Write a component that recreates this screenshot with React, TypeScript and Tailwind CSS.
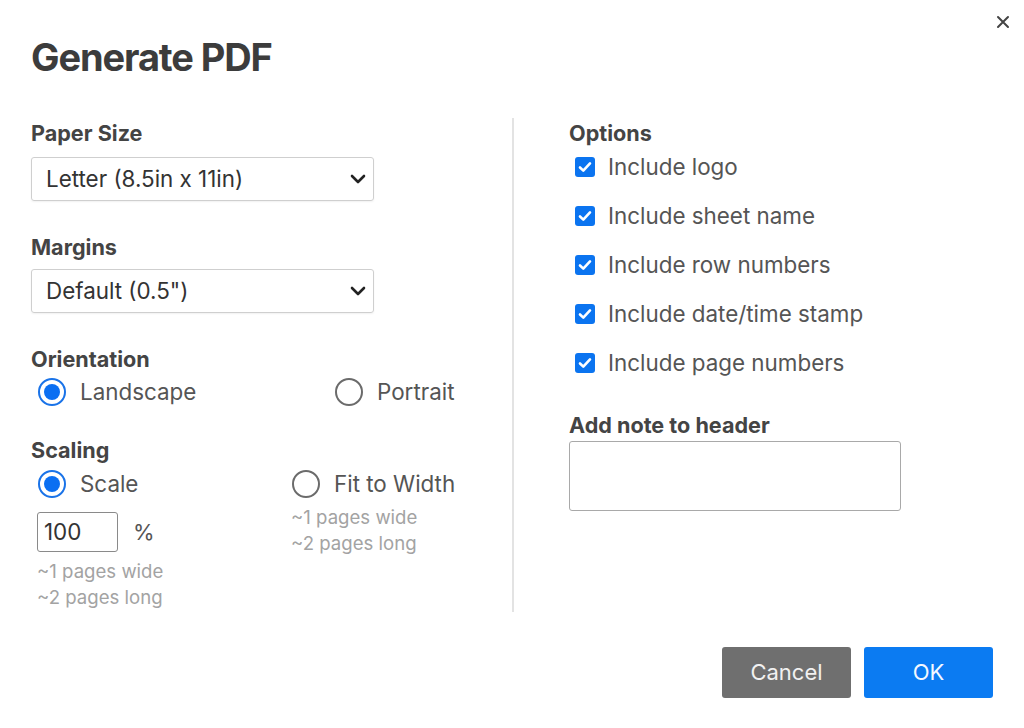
import React from "react";

function Chevron() {
  return (
    <svg width="16" height="10" viewBox="0 0 16 10" className="shrink-0">
      <path d="M2 2 L8 8 L14 2" fill="none" stroke="#222" strokeWidth="2.6" strokeLinecap="round" strokeLinejoin="round" />
    </svg>
  );
}

function Select({ value }: { value: string }) {
  return (
    <div className="flex h-[44px] w-[343px] items-center justify-between rounded-[3px] border border-[#cfcfcf] pl-[14px] pr-[7px] text-[22.4px] text-[#333] shadow-[0_1px_2px_rgba(0,0,0,0.06)]">
      <span>{value}</span>
      <Chevron />
    </div>
  );
}

function Radio({ checked, label }: { checked: boolean; label: string }) {
  return (
    <div className="flex h-[30px] shrink-0 items-center gap-[14px] whitespace-nowrap">
      {checked ? (
        <span className="flex h-[28px] w-[28px] shrink-0 items-center justify-center rounded-full border-[2px] border-[#1a73e8] bg-white">
          <span className="h-[16px] w-[16px] rounded-full bg-[#0b6ff2]" />
        </span>
      ) : (
        <span className="h-[28px] w-[28px] shrink-0 rounded-full border-[2px] border-[#6b6b6b] bg-white" />
      )}
      <span className="text-[22.4px] text-[#555]">{label}</span>
    </div>
  );
}

function Check({ label }: { label: string }) {
  return (
    <div className="flex h-[30px] items-center gap-[13px] whitespace-nowrap pl-[6px]">
      <span className="flex h-[20px] w-[20px] shrink-0 items-center justify-center rounded-[3px] bg-[#0b74f0]">
        <svg width="14" height="12" viewBox="0 0 14 12">
          <path d="M2 6.5 L5.3 9.6 L12 2.4" fill="none" stroke="#fff" strokeWidth="2.6" strokeLinecap="round" strokeLinejoin="round" />
        </svg>
      </span>
      <span className="text-[22.4px] text-[#555]">{label}</span>
    </div>
  );
}

const Label = ({ children, className = "" }: { children: React.ReactNode; className?: string }) => (
  <div className={"h-[24px] whitespace-nowrap text-[21.6px] font-bold leading-[24px] text-[#444] " + className}>{children}</div>
);

export default function App() {
  return (
    <div
      className="relative h-[728px] w-[1024px] overflow-hidden bg-white px-[31px]"
      style={{ fontFamily: "Inter, 'Noto Sans', sans-serif" }}
    >
      <button className="absolute right-[13px] top-[14px] flex h-[16px] w-[16px] items-center justify-center">
        <svg width="14" height="14" viewBox="0 0 14 14">
          <path d="M2 2 L12 12 M12 2 L2 12" stroke="#444" strokeWidth="2" strokeLinecap="round" />
        </svg>
      </button>

      <h1 className="mt-[33px] h-[48px] text-[38px] font-bold leading-[48px] tracking-[-1.1px] text-[#3c3c3c]">Generate PDF</h1>

      <div className="mt-[37px] flex h-[494px]">
        {/* left column */}
        <div className="w-[343px] shrink-0 pt-[3px]">
          <Label>Paper Size</Label>
          <div className="mt-[12px]">
            <Select value="Letter (8.5in x 11in)" />
          </div>
          <Label className="mt-[34px]">Margins</Label>
          <div className="mt-[10px]">
            <Select value={'Default (0.5")'} />
          </div>
          <Label className="mt-[34px]">Orientation</Label>
          <div className="mt-[6px] flex pl-[7px]">
            <div className="w-[297px] shrink-0">
              <Radio checked label="Landscape" />
            </div>
            <Radio checked={false} label="Portrait" />
          </div>
          <Label className="mt-[31px]">Scaling</Label>
          <div className="mt-[7px] flex pl-[7px]">
            <div className="w-[254px] shrink-0">
              <Radio checked label="Scale" />
              <div className="-ml-[1px] mt-[13px] flex items-center gap-[15px]">
                <div className="flex h-[40px] w-[81px] items-center rounded-[3px] border border-[#8a8a8a] pl-[6px] text-[22.4px] text-[#333]">
                  100
                </div>
                <span className="text-[22px] text-[#555]">%</span>
              </div>
              <div className="-ml-[1px] mt-[6px] whitespace-nowrap text-[18.6px] leading-[26px] text-[#a3a3a3]">
                <div>~1 pages wide</div>
                <div>~2 pages long</div>
              </div>
            </div>
            <div className="shrink-0">
              <Radio checked={false} label="Fit to Width" />
              <div className="-ml-[1px] mt-[5px] whitespace-nowrap text-[18.6px] leading-[26px] text-[#a3a3a3]">
                <div>~1 pages wide</div>
                <div>~2 pages long</div>
              </div>
            </div>
          </div>
        </div>

        {/* divider */}
        <div className="ml-[138px] w-[2px] shrink-0 bg-[#e3e3e3]" />

        {/* right column */}
        <div className="ml-[55px] pt-[3px]">
          <Label>Options</Label>
          <div className="mt-[7px] flex flex-col gap-[19px]">
            <Check label="Include logo" />
            <Check label="Include sheet name" />
            <Check label="Include row numbers" />
            <Check label="Include date/time stamp" />
            <Check label="Include page numbers" />
          </div>
          <Label className="mt-[35px]">Add note to header</Label>
          <div className="mt-[4px] h-[70px] w-[332px] rounded-[3px] border border-[#a9a9a9]" />
        </div>
      </div>

      <div className="mt-[35px] flex justify-end gap-[13px]">
        <button className="h-[51px] w-[129px] rounded-[3px] bg-[#6f6f6f] text-[22px] text-[#f1f1f1]">Cancel</button>
        <button className="h-[51px] w-[129px] rounded-[3px] bg-[#0b7bf2] text-[22px] text-[#f4f8ff]">OK</button>
      </div>
    </div>
  );
}
